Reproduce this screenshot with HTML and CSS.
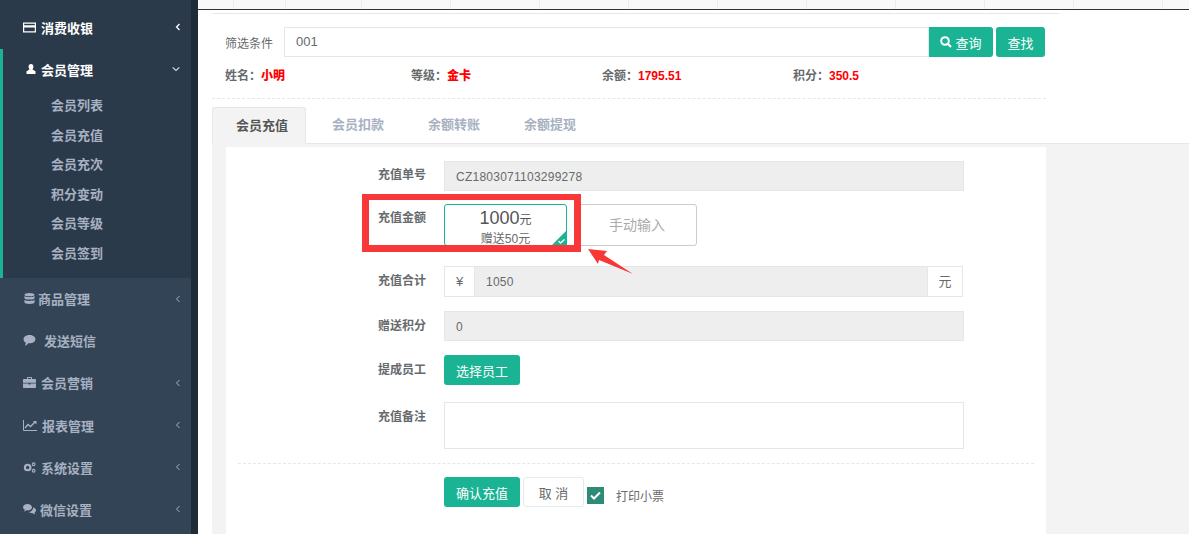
FILE: index.html
```html
<!DOCTYPE html>
<html lang="zh-CN">
  <head>
    <meta charset="UTF-8" />
    <title>会员充值</title>
    <link rel="stylesheet" href="styles.css">
  </head>
  <body>
    <div class="page">
      <!-- Sidebar -->
      <div class="sidebar">
        <div class="nav-top">
          <div class="nav-item open first">
            <svg class="ico" viewBox="0 0 13 10"><path fill="#fff" d="M0 0h13v10H0zM1.200 1.300v1.400h10.600V1.300zM1.200 5v3.800h10.600V5z"/></svg>
            <span class="nav-text gap5">消费收银</span>
            <svg class="chev" viewBox="0 0 6 8"><path d="M4.500 1 1.500 4l3 3" fill="none" stroke="#fff" stroke-width="1.300"/></svg>
          </div>
          <div class="nav-group">
            <div class="nav-item open">
              <svg class="ico user" viewBox="0 0 10 10"><path fill="#fff" d="M5 0a2.400 2.800 0 0 1 2.400 2.800C7.400 4.300 6.700 5 6.500 5.500l3 1.800V10H.5V7.300l3-1.800C3.300 5 2.600 4.300 2.600 2.800A2.400 2.800 0 0 1 5 0z"/></svg>
              <span class="nav-text gap5">会员管理</span>
              <svg class="chev down" viewBox="0 0 8 6"><path d="M.7 1.300 4 4.500l3.300-3.200" fill="none" stroke="#d6dde6" stroke-width="1.100"/></svg>
            </div>
            <ul class="sub">
              <li>会员列表</li>
              <li>会员充值</li>
              <li>会员充次</li>
              <li>积分变动</li>
              <li>会员等级</li>
              <li>会员签到</li>
            </ul>
          </div>
        </div>
        <div class="nav-bottom">
          <div class="nav-item">
            <svg class="ico" viewBox="0 0 11 12"><path fill="#a7b1c2" d="M5.500 0C8.500 0 11 .8 11 1.800S8.500 3.600 5.500 3.600 0 2.800 0 1.800 2.500 0 5.500 0zM0 3.400c1 .9 3 1.300 5.500 1.300s4.500-.4 5.500-1.300v2.200c0 1-2.500 1.600-5.500 1.600S0 6.600 0 5.600zM0 7.300c1 .9 3 1.300 5.500 1.300s4.500-.4 5.500-1.300v2.900c0 1-2.500 1.800-5.500 1.800S0 11.200 0 10.200z"/></svg>
            <span class="nav-text gap2">商品管理</span>
            <svg class="chev" viewBox="0 0 6 8"><path d="M4.500 1 1.500 4l3 3" fill="none" stroke="#a7b1c2" stroke-width="1"/></svg>
          </div>
          <div class="nav-item">
            <svg class="ico" viewBox="0 0 13 12"><path fill="#a7b1c2" d="M6.500 0C10 0 13 2 13 4.500S10 9 6.500 9c-.5 0-1 0-1.500-.1C4 10.300 2.800 11.300 1.500 11.700 2 10.800 2.400 9.800 2.300 8.200 .9 7.400 0 6 0 4.500 0 2 3 0 6.500 0z"/></svg>
            <span class="nav-text gap8">发送短信</span>
          </div>
          <div class="nav-item">
            <svg class="ico" viewBox="0 0 13 11"><path fill="#a7b1c2" d="M4 2V.8C4 .3 4.300 0 4.800 0h3.400C8.700 0 9 .3 9 .8V2h3c.6 0 1 .4 1 1v2.700H0V3c0-.6.4-1 1-1zM5 1v1h3V1zM0 6.500h5.500v1h2v-1H13V10c0 .6-.4 1-1 1H1c-.6 0-1-.4-1-1z"/></svg>
            <span class="nav-text gap5">会员营销</span>
            <svg class="chev" viewBox="0 0 6 8"><path d="M4.500 1 1.500 4l3 3" fill="none" stroke="#a7b1c2" stroke-width="1"/></svg>
          </div>
          <div class="nav-item">
            <svg class="ico wide" viewBox="0 0 14 11"><path fill="none" stroke="#a7b1c2" stroke-width="1" d="M.5 0v10.500H14"/><path fill="none" stroke="#a7b1c2" stroke-width="1.400" d="M2 8l3-3.500 2.500 2L12 2"/><path fill="#a7b1c2" d="M10 1h3.500v3.500z"/></svg>
            <span class="nav-text gap5">报表管理</span>
            <svg class="chev" viewBox="0 0 6 8"><path d="M4.500 1 1.500 4l3 3" fill="none" stroke="#a7b1c2" stroke-width="1"/></svg>
          </div>
          <div class="nav-item">
            <svg class="ico" viewBox="0 0 13 12"><circle cx="4.500" cy="6" r="3" fill="none" stroke="#a7b1c2" stroke-width="2.400"/><circle cx="11" cy="2.500" r="1.500" fill="none" stroke="#a7b1c2" stroke-width="1.200"/><circle cx="11" cy="9.500" r="1.500" fill="none" stroke="#a7b1c2" stroke-width="1.200"/></svg>
            <span class="nav-text gap5">系统设置</span>
            <svg class="chev" viewBox="0 0 6 8"><path d="M4.500 1 1.500 4l3 3" fill="none" stroke="#a7b1c2" stroke-width="1"/></svg>
          </div>
          <div class="nav-item">
            <svg class="ico" viewBox="0 0 13 11"><path fill="#a7b1c2" d="M4.500 0C7 0 9 1.400 9 3.200S7 6.400 4.500 6.400c-.4 0-.8 0-1.100-.1C2.700 7 1.800 7.400 1 7.500c.4-.5.7-1.100.7-1.900C.7 5 0 4.200 0 3.200 0 1.400 2 0 4.500 0zM10 3.500c1.800.3 3 1.400 3 2.800 0 .9-.5 1.700-1.400 2.200 0 .8.300 1.400.7 1.900-.9-.1-1.700-.5-2.400-1.200-1.500.2-3.200-.2-4.100-1.100C8.200 8 10.300 6 10 3.500z"/></svg>
            <span class="nav-text gap4">微信设置</span>
            <svg class="chev" viewBox="0 0 6 8"><path d="M4.500 1 1.500 4l3 3" fill="none" stroke="#a7b1c2" stroke-width="1"/></svg>
          </div>
        </div>
      </div>

      <!-- Main -->
      <div class="main">
        <div class="table-head">
          <i class="c1"></i><i class="c2"></i><i class="c3"></i><i></i><i></i><i></i><i></i><i></i><i></i><i></i><i></i><i></i>
        </div>
        <div class="top-line"></div>

        <div class="filter">
          <label class="filter-label">筛选条件</label>
          <div class="filter-input">001</div>
          <button class="btn btn-join">
            <svg class="search" viewBox="0 0 12 12"><circle cx="5" cy="5" r="3.800" fill="none" stroke="#fff" stroke-width="2"/><path d="M7.800 7.800 11 11" stroke="#fff" stroke-width="2.200"/></svg>查询
          </button>
          <button class="btn btn-find">查找</button>
        </div>

        <div class="info">
          <span class="i1">姓名：<b>小明</b></span>
          <span class="i2">等级：<b>金卡</b></span>
          <span class="i3">余额：<b>1795.51</b></span>
          <span class="i4">积分：<b>350.5</b></span>
        </div>
        <div class="info-dash"></div>

        <div class="tabs">
          <div class="tab active">会员充值</div>
          <div class="tab">会员扣款</div>
          <div class="tab">余额转账</div>
          <div class="tab">余额提现</div>
        </div>

        <div class="tab-body">
          <div class="panel">
            <div class="row r1">
              <label>充值单号</label>
              <div class="field grey code">CZ1803071103299278</div>
            </div>
            <div class="row r2">
              <label>充值金额</label>
              <div class="cards">
                <div class="card selected">
                  <div class="amount">1000<small>元</small></div>
                  <div class="bonus">赠送50元</div>
                  <svg class="tick" viewBox="0 0 15 15"><path fill="#1ab394" d="M15 0v15H0z"/><path d="M6.500 11l2 2 4-3.500" fill="none" stroke="#fff" stroke-width="1.400"/></svg>
                </div>
                <div class="card manual">手动输入</div>
              </div>
            </div>
            <div class="row r3">
              <label>充值合计</label>
              <div class="group">
                <span class="addon left">¥</span>
                <div class="field grey total">1050</div>
                <span class="addon right">元</span>
              </div>
            </div>
            <div class="row r4">
              <label>赠送积分</label>
              <div class="field grey code">0</div>
            </div>
            <div class="row r5">
              <label>提成员工</label>
              <button class="btn btn-staff">选择员工</button>
            </div>
            <div class="row r6">
              <label>充值备注</label>
              <div class="field memo"></div>
            </div>
            <div class="dash"></div>
            <div class="actions">
              <button class="btn btn-staff">确认充值</button>
              <button class="btn-cancel">取 消</button>
              <span class="check">
                <svg viewBox="0 0 17 17"><path d="M4 8.500l3 3 6-6" fill="none" stroke="#fff" stroke-width="2"/></svg>
              </span>
              <span class="check-text">打印小票</span>
            </div>
          </div>
        </div>
      </div>
    </div>

    <!-- Annotation drawn over the page -->
    <div class="mark"></div>
    <svg class="arrow" viewBox="0 0 50 30"><path fill="#f83838" d="M1 2 20 4 17 8 46 27 12 13 11 17z"/></svg>
  </body>
</html>
```

FILE: styles.css
```css
* {
  box-sizing: border-box;
  margin: 0;
  padding: 0;
}

html,
body {
  height: 100%;
  overflow: hidden;
}

body {
  font-family: "Liberation Sans", "Noto Sans CJK SC", sans-serif;
  font-size: 12px;
  color: #676a6c;
  background-color: #fff;
  position: relative;
}

.page {
  display: flex;
  height: 534px;
}

/* sidebar */
.sidebar {
  width: 198px;
  flex-shrink: 0;
  background-color: #324455;
  border-right: 7px solid #1f2b37;
  font-size: 13px;
  font-weight: bold;
}

.nav-top {
  background-color: #2b3a4a;
  height: 278px;
  padding-top: 6px;
}

.nav-group {
  border-left: 3px solid #1ab394;
  height: 229px;
}

.nav-item {
  display: flex;
  align-items: center;
  height: 42.2px;
  color: #a7b1c2;
}

.nav-item.open {
  color: #fff;
}

.nav-item.first {
  height: 43px;
  padding-bottom: 1px;
}

.nav-group .nav-item {
  height: 40px;
}

.nav-bottom {
  margin-top: -0.6px;
}

.ico {
  width: 13px;
  height: 11px;
  margin-left: 23px;
  flex-shrink: 0;
}

.ico.wide {
  width: 14px;
}

.ico.user {
  width: 10px;
  height: 10px;
}

.gap2 { margin-left: 2px; }
.gap4 { margin-left: 4px; }
.gap5 { margin-left: 5px; }
.gap8 { margin-left: 8px; }

.chev {
  width: 6px;
  height: 8px;
  margin-left: auto;
  margin-right: 10px;
}

.chev.down {
  width: 8px;
  height: 6px;
  margin-right: 11px;
}

.sub {
  list-style: none;
  padding-left: 48px;
  margin-top: 2px;
}

.sub li {
  height: 29.6px;
  line-height: 29.6px;
  color: #a7b1c2;
}

/* main */
.main {
  flex: 1;
  min-width: 0;
}

.table-head {
  display: flex;
  height: 10px;
  background-color: #f9f9f9;
  border-bottom: 1px solid #2f353e;
}

.table-head i {
  width: 89px;
  border-right: 1px solid #ececec;
  flex-shrink: 0;
}

.table-head .c1 { width: 36px; }
.table-head .c2 { width: 52px; }
.table-head .c3 { width: 76px; }

.top-line {
  height: 1px;
  background-color: #e7e7e7;
  margin: 3px 130px 0 14px;
}

.filter {
  display: flex;
  align-items: center;
  height: 30px;
  margin: 13px 0 0 27px;
}

.filter-label {
  width: 59px;
}

.filter-input {
  width: 645px;
  height: 30px;
  line-height: 28px;
  padding-left: 11px;
  font-size: 13px;
  border: 1px solid #e5e6e7;
}

.btn {
  background-color: #1ab394;
  color: #fff;
  font-family: inherit;
  font-size: 13px;
  border: none;
  border-radius: 3px;
}

.btn-join {
  width: 64px;
  height: 30px;
  border-radius: 0 3px 3px 0;
  display: flex;
  align-items: center;
  justify-content: center;
}

.search {
  width: 12px;
  height: 12px;
  margin-right: 3px;
}

.btn-find {
  width: 49px;
  height: 30px;
  margin-left: 3px;
}

.info {
  display: flex;
  height: 17px;
  line-height: 17px;
  margin: 11px 0 0 27px;
  font-weight: bold;
}

.info b {
  color: #f00;
}

.i1 { width: 186px; }
.i2 { width: 191px; }
.i3 { width: 191px; }

.info-dash {
  width: 834px;
  margin: 13px 0 0 14px;
  border-top: 1px dashed #e7e7e7;
}

.tabs {
  display: flex;
  height: 37px;
  margin: 8px 0 0 14px;
  border-bottom: 1px solid #e7e7e7;
  font-size: 13px;
  font-weight: bold;
  color: #a7b1c2;
}

.tab {
  width: 96px;
  padding-left: 24px;
  line-height: 36px;
}

.tab.active {
  width: 94px;
  padding-left: 23px;
  margin-right: 2px;
  height: 37px;
  background-color: #f3f3f4;
  border: 1px solid #e7e7e7;
  border-bottom: none;
  border-radius: 3px 3px 0 0;
  color: #555;
}

.tab-body {
  margin-left: 14px;
  height: 400px;
  padding: 3px 143px 0 14px;
  background-color: #f3f3f4;
}

.panel {
  height: 400px;
  background-color: #fff;
  padding: 14px 12px 0;
}

.row {
  display: flex;
}

.row label {
  width: 206px;
  padding-left: 140px;
  font-weight: bold;
  line-height: 28px;
  flex-shrink: 0;
}

.field {
  width: 520px;
  height: 30px;
  line-height: 30px;
  font-size: 12px;
  padding-left: 11px;
  letter-spacing: 0.25px;
}

.field.grey {
  background-color: #eee;
  border: 1px solid #e5e6e7;
}

.r2 { margin-top: 13px; }
.r3 { margin-top: 20px; }
.r4 { margin-top: 14px; }
.r5 { margin-top: 14px; }
.r6 { margin-top: 17px; }

.r3 label,
.r4 label,
.r5 label,
.r6 label {
  line-height: 30px;
}

.cards {
  display: flex;
  gap: 10px;
}

.card {
  width: 123px;
  height: 42px;
  border: 1px solid #ccc;
  border-radius: 3px;
  text-align: center;
  position: relative;
}

.card.selected {
  border-color: #1ab394;
}

.amount {
  font-size: 18px;
  line-height: 24px;
  margin-top: 1px;
  color: #555;
}

.amount small {
  font-size: 12px;
}

.bonus {
  font-size: 12px;
  line-height: 14px;
}

.tick {
  position: absolute;
  right: -1px;
  bottom: 0;
  width: 15px;
  height: 15px;
}

.card.manual {
  width: 120px;
  line-height: 40px;
  font-size: 14px;
  color: #aaa;
}

.group {
  display: flex;
  width: 519px;
  height: 31px;
}

.addon {
  height: 31px;
  line-height: 29px;
  text-align: center;
  border: 1px solid #e5e6e7;
}

.addon.left { width: 30px; font-size: 13px; border-right: none; }
.addon.right { width: 35px; font-size: 13px; border-left: none; }

.total {
  width: 454px;
  height: 31px;
}

.btn-staff {
  width: 76px;
  height: 30px;
}

.memo {
  height: 47px;
  border: 1px solid #e5e6e7;
}

.dash {
  width: 796px;
  border-top: 1px dashed #e7e7e7;
  margin-top: 14px;
}

.actions {
  display: flex;
  align-items: center;
  margin: 13px 0 0 206px;
}

.btn-cancel {
  width: 61px;
  height: 30px;
  margin-left: 3px;
  font-family: inherit;
  font-size: 13px;
  color: #676a6c;
  background-color: #fff;
  border: 1px solid #e7eaec;
  border-radius: 3px;
}

.check {
  width: 17px;
  height: 17px;
  margin: 7px 0 0 3px;
  background-color: #2e8b78;
}

.check svg {
  display: block;
  width: 17px;
  height: 17px;
}

.check-text {
  margin: 7px 0 0 12px;
}

/* annotation */
.mark {
  position: absolute;
  left: 362px;
  top: 194px;
  width: 219px;
  height: 58px;
  border: 7px solid #f83838;
  border-top-width: 6px;
}

.arrow {
  position: absolute;
  left: 587px;
  top: 247px;
  width: 50px;
  height: 30px;
}
```
